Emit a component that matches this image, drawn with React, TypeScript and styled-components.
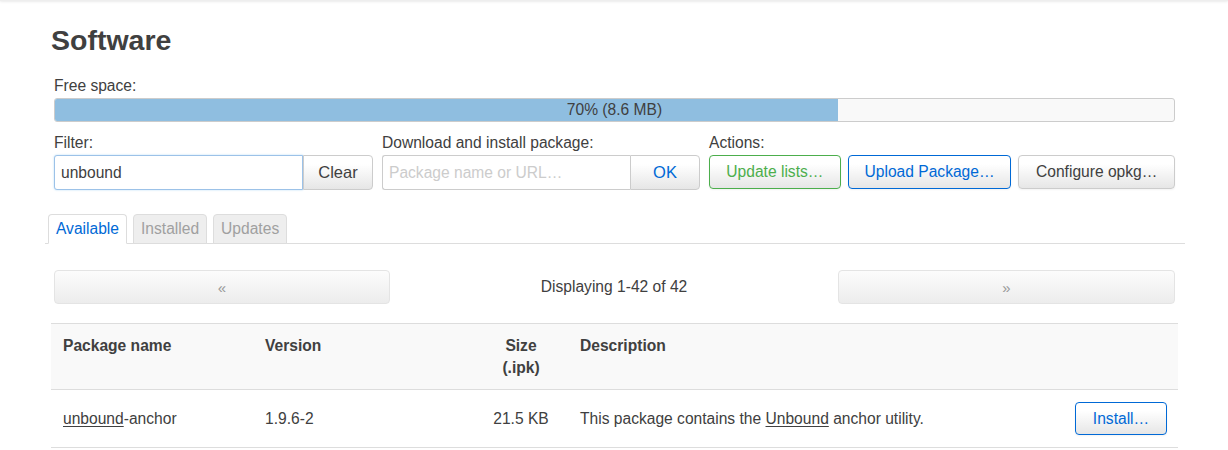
import styled, { createGlobalStyle, css } from "styled-components";

const GlobalStyle = createGlobalStyle`
  body {
    margin: 0;
    background: #fff;
    font-family: "Liberation Sans", Arial, sans-serif;
    font-size: 15.6px;
    color: #404040;
  }
`;

const HeaderShadow = styled.div`
  height: 1px;
  background: #eee;
  box-shadow: 0 0 3px rgba(0, 0, 0, 0.25);
`;

const Main = styled.main`
  padding: 23px 50px 0 51px;
`;

const Title = styled.h2`
  margin: 0;
  font-size: 28.5px;
  font-weight: bold;
  color: #404040;
`;

const Section = styled.div`
  padding: 0 3px;
`;

const Label = styled.div`
  line-height: 22px;
`;

const FreeLabel = styled(Label)`
  margin-top: 18px;
  margin-bottom: 1px;
`;

const Progress = styled.div`
  position: relative;
  height: 22px;
  border: 1px solid #ccc;
  border-radius: 3px;
  background: #f9f9f9;
  overflow: hidden;
`;

const ProgressFill = styled.div`
  height: 100%;
  background: #8fbee0;
`;

const ProgressText = styled.div`
  position: absolute;
  inset: 0;
  text-align: center;
  line-height: 22px;
  color: #404040;
`;

const Controls = styled.div`
  display: flex;
  gap: 9px;
  margin-top: 10px;
`;

const Control = styled.div<{ $width: number }>`
  width: ${({ $width }) => $width}px;
  display: flex;
  flex-direction: column;
  gap: 1px;
`;

const InputGroup = styled.div`
  display: flex;
  height: 35px;
`;

const TextInput = styled.input<{ $focused?: boolean }>`
  flex: 1;
  min-width: 0;
  box-sizing: border-box;
  height: 35px;
  margin: 0;
  padding: 0 6px;
  font: inherit;
  color: #404040;
  border: 1px solid #ccc;
  border-right: none;
  border-radius: 3px 0 0 3px;
  outline: none;
  &::placeholder {
    color: #ccc;
  }
  ${({ $focused }) =>
    $focused &&
    css`
      border-color: #9cc2e8;
      border-right: 1px solid #9cc2e8;
      box-shadow: 0 0 2px rgba(82, 168, 236, 0.45);
    `}
`;

const buttonBase = css`
  box-sizing: border-box;
  margin: 0;
  font-family: inherit;
  background: linear-gradient(#fff, #fff 25%, #e6e6e6);
  border: 1px solid #ccc;
  border-radius: 4px;
  cursor: pointer;
  white-space: nowrap;
`;

const AddonButton = styled.button<{ $blue?: boolean }>`
  ${buttonBase};
  width: 70px;
  height: 35px;
  font-size: 16.5px;
  border-radius: 0 4px 4px 0;
  color: ${({ $blue }) => ($blue ? "#0069d6" : "#404040")};
`;

const Actions = styled.div`
  display: flex;
  gap: 7px;
`;

type Tone = "positive" | "primary" | "neutral";

const toneColor: Record<Tone, { border: string; text: string }> = {
  positive: { border: "#4cae4c", text: "#4cae4c" },
  primary: { border: "#0069d6", text: "#0069d6" },
  neutral: { border: "#ccc", text: "#404040" },
};

const ActionButton = styled.button<{ $tone: Tone; $width: number }>`
  ${buttonBase};
  height: 34px;
  width: ${({ $width }) => $width}px;
  font-size: 15.6px;
  border-color: ${({ $tone }) => toneColor[$tone].border};
  color: ${({ $tone }) => toneColor[$tone].text};
  box-shadow: 0 1px 2px rgba(0, 0, 0, 0.05);
`;

const Tabs = styled.ul`
  display: flex;
  gap: 6px;
  list-style: none;
  margin: 24px -7px 0 -6px;
  padding: 0 0 0 3px;
  border-bottom: 1px solid #ddd;
`;

const Tab = styled.li<{ $active?: boolean }>`
  box-sizing: border-box;
  height: 30px;
  margin-bottom: -1px;
  padding: 0 7px;
  line-height: 28px;
  border: 1px solid #ddd;
  border-radius: 4px 4px 0 0;
  background: ${({ $active }) => ($active ? "#fff" : "#eee")};
  border-bottom-color: ${({ $active }) => ($active ? "#fff" : "#ddd")};
  color: ${({ $active }) => ($active ? "#0069d6" : "#a0a0a0")};
`;

const Pager = styled.div`
  display: grid;
  grid-template-columns: 336px 1fr 337px;
  align-items: center;
  margin-top: 26px;
  padding: 0 3px;
`;

const PagerButton = styled.button`
  ${buttonBase};
  height: 34px;
  font-size: 15px;
  color: #999;
  border-color: #e4e4e4;
  background: linear-gradient(#fcfcfc, #ececec);
`;

const PagerInfo = styled.div`
  text-align: center;
`;

const Table = styled.div`
  margin-top: 19px;
`;

const Row = styled.div<{ $head?: boolean }>`
  display: grid;
  grid-template-columns: 202px 221px 94px 1fr 115px;
  align-items: ${({ $head }) => ($head ? "start" : "center")};
  padding: ${({ $head }) => ($head ? "11px 0 10px" : "12px 0")};
  line-height: 22px;
  border-bottom: 1px solid #ddd;
  ${({ $head }) =>
    $head &&
    css`
      background: #f9f9f9;
      border-top: 1px solid #ddd;
      font-weight: bold;
    `}
`;

const Cell = styled.div<{ $align?: "left" | "center" | "right" }>`
  padding: 0 12px;
  text-align: ${({ $align }) => $align ?? "left"};
`;

const ActionCell = styled.div`
  display: flex;
  justify-content: flex-end;
  padding-right: 11px;
`;

const Match = styled.span`
  text-decoration: underline;
  text-underline-offset: 2px;
`;

const InstallButton = styled.button`
  ${buttonBase};
  width: 92px;
  height: 33px;
  font-size: 15.6px;
  color: #0069d6;
  border-color: #0069d6;
  box-shadow: 0 1px 2px rgba(0, 0, 0, 0.05);
`;

export default function App() {
  return (
    <>
      <GlobalStyle />
      <HeaderShadow />
      <Main>
        <Title>Software</Title>

        <Section>
          <FreeLabel>Free space:</FreeLabel>
          <Progress>
            <ProgressFill style={{ width: "70%" }} />
            <ProgressText>70% (8.6 MB)</ProgressText>
          </Progress>

          <Controls>
            <Control $width={319}>
              <Label>Filter:</Label>
              <InputGroup>
                <TextInput $focused defaultValue="unbound" />
                <AddonButton>Clear</AddonButton>
              </InputGroup>
            </Control>
            <Control $width={318}>
              <Label>Download and install package:</Label>
              <InputGroup>
                <TextInput placeholder="Package name or URL…" />
                <AddonButton $blue>OK</AddonButton>
              </InputGroup>
            </Control>
            <Control $width={466}>
              <Label>Actions:</Label>
              <Actions>
                <ActionButton $tone="positive" $width={132}>
                  Update lists…
                </ActionButton>
                <ActionButton $tone="primary" $width={164}>
                  Upload Package…
                </ActionButton>
                <ActionButton $tone="neutral" $width={157}>
                  Configure opkg…
                </ActionButton>
              </Actions>
            </Control>
          </Controls>
        </Section>

        <Tabs>
          <Tab $active>Available</Tab>
          <Tab>Installed</Tab>
          <Tab>Updates</Tab>
        </Tabs>

        <Pager>
          <PagerButton>«</PagerButton>
          <PagerInfo>Displaying 1-42 of 42</PagerInfo>
          <PagerButton>»</PagerButton>
        </Pager>

        <Table>
          <Row $head>
            <Cell>Package name</Cell>
            <Cell>Version</Cell>
            <Cell $align="center">
              Size
              <br />
              (.ipk)
            </Cell>
            <Cell>Description</Cell>
            <Cell />
          </Row>
          <Row>
            <Cell>
              <Match>unbound</Match>-anchor
            </Cell>
            <Cell>1.9.6-2</Cell>
            <Cell $align="center">21.5 KB</Cell>
            <Cell>
              This package contains the <Match>Unbound</Match> anchor utility.
            </Cell>
            <ActionCell>
              <InstallButton>Install…</InstallButton>
            </ActionCell>
          </Row>
        </Table>
      </Main>
    </>
  );
}
